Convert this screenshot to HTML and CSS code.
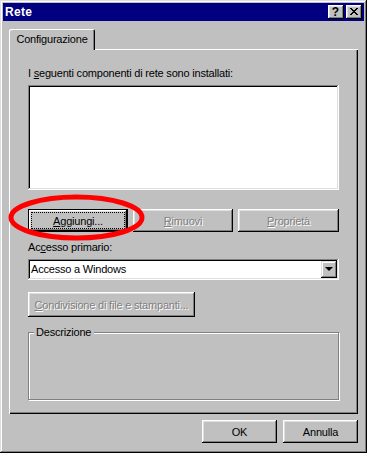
FILE: index.html
```html
<!DOCTYPE html>
<html>
<head>
	<meta charset=utf-8>
	<title>Rete</title>
	<link rel="stylesheet" href="styles.css">
</head>
<body>
<div class=window>
	<div class=titlebar>
		<span class=title>Rete</span>
		<div class=title-buttons>
			<button class=tbtn><span class=help>?</span></button>
			<button class=tbtn>
				<svg width=8 height=7 viewBox="0 0 8 7" shape-rendering="crispEdges">
					<path d="M0 0h2v1h-2zM6 0h2v1h-2zM1 1h2v1h-2zM5 1h2v1h-2zM2 2h4v1h-4zM3 3h2v1h-2zM2 4h4v1h-4zM1 5h2v1h-2zM5 5h2v1h-2zM0 6h2v1h-2zM6 6h2v1h-2z" fill="#000"/>
				</svg>
			</button>
		</div>
	</div>
	<div class=tabs>
		<div class="tab selected">Configurazione</div>
	</div>
	<section class=panel>
		<div class=caption>I <u>s</u>eguenti componenti di rete sono installati:</div>
		<div class=listbox></div>
		<div class=actions>
			<button class="btn default"><span class=focus><u>A</u>ggiungi...</span></button>
			<button class="btn off"><u>R</u>imuovi</button>
			<button class="btn off last"><u>P</u>roprietà</button>
		</div>
		<div class="caption second">Ac<u>c</u>esso primario:</div>
		<div class=combo>
			<span class=combo-text>Accesso a Windows</span>
			<span class=combo-arrow><i></i></span>
		</div>
		<button class="btn off share"><u>C</u>ondivisione di file e stampanti...</button>
		<fieldset class=group>
			<legend>Descrizione</legend>
		</fieldset>
	</section>
	<div class=footer>
		<button class=btn>OK</button>
		<button class=btn>Annulla</button>
	</div>
	<svg class=mark width=142 height=52>
		<ellipse cx="69.5" cy="25.5" rx="65.5" ry="20.5" fill="none" stroke="#ff0000" stroke-width="5"/>
	</svg>
</div>
</body>
</html>
```
FILE: styles.css
```css
* {
	margin: 0;
	padding: 0;
	box-sizing: border-box;
}
body {
	background: #c0c0c0;
	font-family: "Liberation Sans", Arial, sans-serif;
	font-size: 11px;
	letter-spacing: -.2px;
	color: #000;
}
u {
	text-decoration: underline;
	text-underline-offset: 1px;
}
.window {
	position: relative;
	width: 367px;
	height: 453px;
	padding: 3px;
	display: flex;
	flex-direction: column;
	background: #c0c0c0;
	box-shadow: inset -1px -1px #000, inset 1px 1px #dfdfdf, inset -2px -2px #808080, inset 2px 2px #fff;
}
.titlebar {
	height: 18px;
	background: #000080;
	display: flex;
	align-items: center;
	justify-content: space-between;
	padding: 0 2px;
}
.title {
	color: #fff;
	font-weight: bold;
	font-size: 12px;
	letter-spacing: .3px;
}
.title-buttons {
	display: flex;
	gap: 2px;
}
.tbtn {
	width: 16px;
	height: 14px;
	border: 0;
	background: #c0c0c0;
	display: flex;
	align-items: center;
	justify-content: center;
	font-family: inherit;
	box-shadow: inset -1px -1px #000, inset 1px 1px #fff, inset -2px -2px #808080, inset 2px 2px #dfdfdf;
}
.tbtn svg {
	margin: 0 1px 1px 0;
}
.help {
	font-weight: bold;
	font-size: 12px;
	line-height: 12px;
	margin: 0 1px 1px 0;
}
.tabs {
	display: flex;
	margin: 8px 6px 0;
	position: relative;
	z-index: 1;
}
.tab {
	width: 86px;
	height: 21px;
	margin-bottom: -1px;
	background: #c0c0c0;
	text-align: center;
	line-height: 20px;
	border-radius: 2px 2px 0 0;
	box-shadow: inset 1px 1px #fff, inset -1px 0 #000, inset -2px 0 #808080;
}
.panel {
	height: 365px;
	margin: 0 6px;
	padding: 18px 19px 0;
	display: flex;
	flex-direction: column;
	box-shadow: inset 1px 1px #fff, inset -1px -1px #000, inset -2px -2px #808080;
}
.caption {
	height: 13px;
	line-height: 13px;
}
.caption.second {
	margin-top: 9px;
}
.listbox {
	margin-top: 5px;
	height: 105px;
	background: #fff;
	box-shadow: inset -1px -1px #fff, inset 1px 1px #808080, inset -2px -2px #dfdfdf, inset 2px 2px #000;
}
.btn {
	height: 23px;
	border: 0;
	background: #c0c0c0;
	font-family: inherit;
	font-size: 11px;
	letter-spacing: -.2px;
	color: #000;
	box-shadow: inset -1px -1px #000, inset 1px 1px #fff, inset -2px -2px #808080, inset 2px 2px #dfdfdf;
}
.btn.default {
	box-shadow: inset 0 0 0 1px #000, inset -2px -2px #000, inset 2px 2px #fff, inset -3px -3px #808080, inset 3px 3px #dfdfdf;
	padding: 4px;
}
.btn .focus {
	display: flex;
	align-items: center;
	justify-content: center;
	height: 100%;
	outline: 1px dotted #000;
}
.btn.off {
	color: #808080;
	text-shadow: 1px 1px 0 #fff;
}
.actions {
	margin-top: 19px;
	display: flex;
	gap: 5px;
}
.actions .btn {
	width: 100px;
}
.actions .btn.last {
	width: 101px;
}
.combo {
	margin-top: 5px;
	height: 21px;
	background: #fff;
	display: flex;
	align-items: center;
	justify-content: space-between;
	padding: 2px;
	box-shadow: inset -1px -1px #fff, inset 1px 1px #808080, inset -2px -2px #dfdfdf, inset 2px 2px #000;
}
.combo-text {
	padding-left: 1px;
	line-height: 17px;
}
.combo-arrow {
	width: 16px;
	height: 17px;
	background: #c0c0c0;
	display: flex;
	align-items: center;
	justify-content: center;
	box-shadow: inset -1px -1px #000, inset 1px 1px #dfdfdf, inset -2px -2px #808080, inset 2px 2px #fff;
}
.combo-arrow i {
	width: 0;
	height: 0;
	border-left: 4px solid transparent;
	border-right: 4px solid transparent;
	border-top: 4px solid #000;
	margin: 0 1px 1px 0;
}
.share {
	margin-top: 12px;
	width: 167px;
	height: 25px;
}
.group {
	margin-top: 9px;
	height: 74px;
	border: 1px solid #808080;
	box-shadow: 1px 1px 0 #fff, inset 1px 1px 0 #fff;
	min-inline-size: 0;
}
.group legend {
	margin-left: 5px;
	padding: 0 3px 0 2px;
	line-height: 13px;
	background: #c0c0c0;
}
.footer {
	margin-top: 6px;
	padding-right: 6px;
	display: flex;
	justify-content: flex-end;
	gap: 6px;
}
.footer .btn {
	width: 75px;
}
.mark {
	position: absolute;
	left: 7px;
	top: 192px;
}
```
